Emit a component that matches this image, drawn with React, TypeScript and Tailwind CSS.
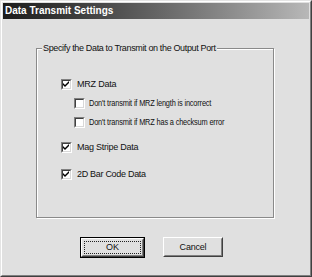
import React from "react";

const font = { fontFamily: '"Liberation Sans", Arial, sans-serif' };

function Check({ checked }: { checked: boolean }) {
  return (
    <div className="w-[11px] h-[11px] border-t border-l border-t-[#808080] border-l-[#808080] border-b border-r border-b-white border-r-white shrink-0">
      <div className="w-full h-full border-t border-l border-t-[#404040] border-l-[#404040] border-b border-r border-b-[#d8d8d8] border-r-[#d8d8d8] bg-white flex items-center justify-center">
        {checked && (
          <svg width="7" height="7" viewBox="0 0 7 7">
            <path d="M0 2 L2 4 L6 0 L6 2 L2 6 L0 4 Z" fill="#000" />
          </svg>
        )}
      </div>
    </div>
  );
}

function Row({ checked, label, cls, tracking }: { checked: boolean; label: string; cls: string; tracking: string }) {
  return (
    <div className={`flex items-center h-[11px] ${cls}`}>
      <Check checked={checked} />
      <span className={`text-[9px] leading-[11px] text-[#111] whitespace-nowrap origin-left ${tracking}`}>{label}</span>
    </div>
  );
}

export default function App() {
  return (
    <div style={font} className="w-[312px] h-[277px] border border-t-[#e4e4e4] border-l-[#e4e4e4] border-r-[#404040] border-b-[#404040] bg-[#e0e0e0]">
      <div className="w-full h-full border border-t-white border-l-white border-r-[#808080] border-b-[#808080] p-[1px] flex flex-col">
        <div className="h-[16px] shrink-0 bg-gradient-to-r from-[#1c1c1c] to-[#b8b8b8] flex items-center pl-[2px]">
          <span className="text-[10px] font-bold text-white leading-none">Data Transmit Settings</span>
        </div>
        <div className="relative ml-[33px] mt-[29px] w-[238px] h-[170px] border border-[#8a8a8a] shadow-[1px_1px_0_#ffffff,inset_1px_1px_0_#ffffff] flex flex-col">
          <span className="absolute left-[5px] top-[-7px] px-[1px] bg-[#e0e0e0] text-[9px] leading-[12px] text-[#111] whitespace-nowrap tracking-[-0.35px]">
            Specify the Data to Transmit on the Output Port
          </span>
          <Row checked label="MRZ Data" cls="ml-[24px] gap-[5px] mt-[30px]" tracking="tracking-[-0.2px]" />
          <Row checked={false} label="Don't transmit if MRZ length is incorrect" cls="ml-[37px] gap-[4px] mt-[8px]" tracking="tracking-[-0.2px] scale-x-[0.82]" />
          <Row checked={false} label="Don't transmit if MRZ has a checksum error" cls="ml-[37px] gap-[4px] mt-[8px]" tracking="tracking-[-0.2px] scale-x-[0.82]" />
          <Row checked label="Mag Stripe Data" cls="ml-[24px] gap-[5px] mt-[14px]" tracking="tracking-[-0.25px]" />
          <Row checked label="2D Bar Code Data" cls="ml-[24px] gap-[5px] mt-[16px]" tracking="tracking-[-0.3px]" />
        </div>
        <div className="flex ml-[77px] mt-[19px] gap-[18px]">
          <button className="w-[65px] h-[21px] border border-black p-0 bg-[#e0e0e0]">
            <div className="w-full h-full border border-t-white border-l-white border-r-[#404040] border-b-[#404040]">
              <div className="w-full h-full border border-t-[#e0e0e0] border-l-[#e0e0e0] border-r-[#808080] border-b-[#808080] p-[1px]">
                <div className="w-full h-full border border-dotted border-[#222] flex items-center justify-center text-[9px] text-[#111] leading-none">
                  OK
                </div>
              </div>
            </div>
          </button>
          <button className="w-[60px] h-[20px] border border-t-white border-l-white border-r-[#404040] border-b-[#404040] p-0 bg-[#e0e0e0]">
            <div className="w-full h-full border border-t-[#e0e0e0] border-l-[#e0e0e0] border-r-[#808080] border-b-[#808080] flex items-center justify-center text-[9px] text-[#111] leading-none tracking-[-0.2px]">
              Cancel
            </div>
          </button>
        </div>
      </div>
    </div>
  );
}
